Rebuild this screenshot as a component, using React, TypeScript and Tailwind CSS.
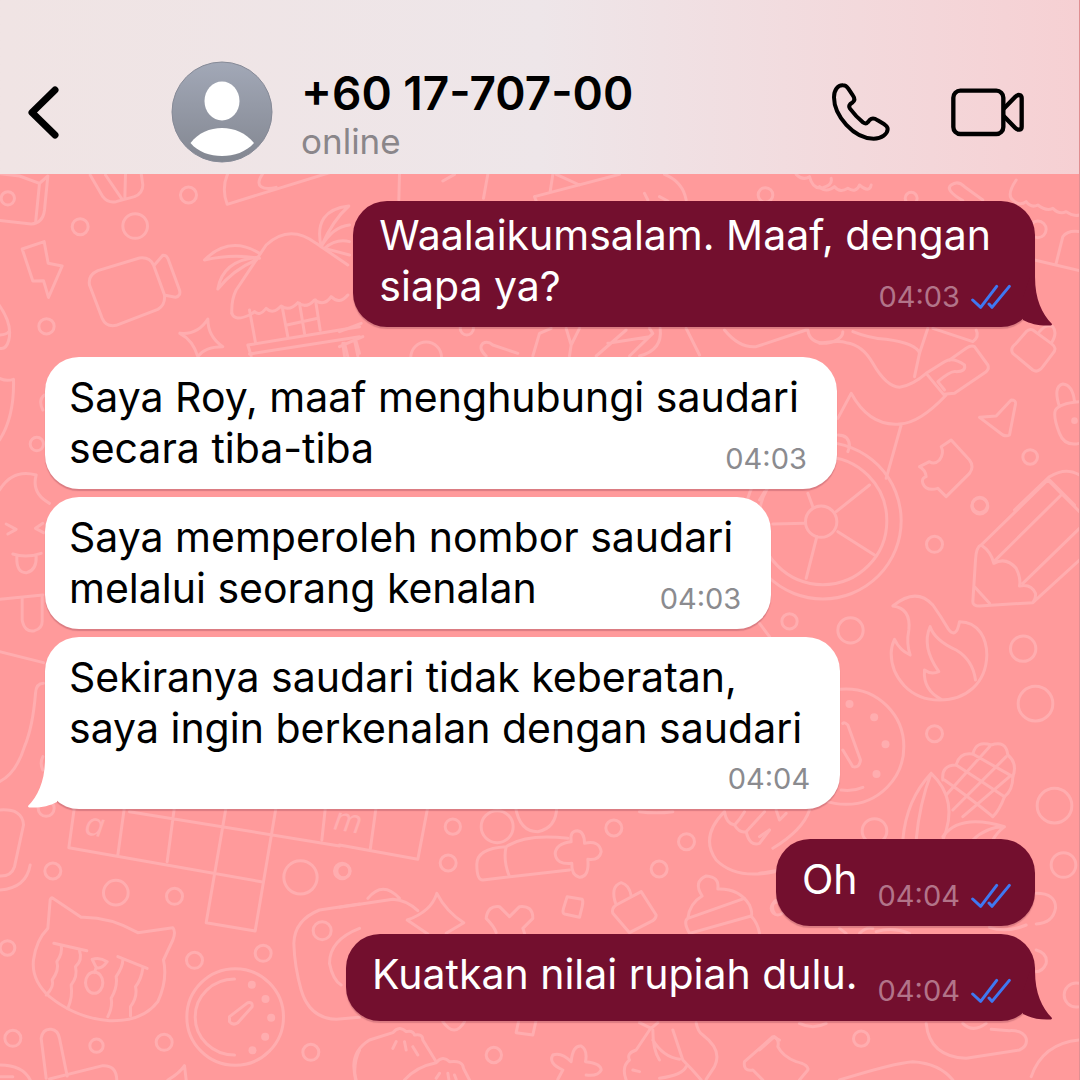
import React from "react";
import clsx from "clsx";

type Message = {
  lines: string[];
  time: string;
  sent?: boolean;
  tail?: boolean;
  snug?: boolean;
  timeBelow?: boolean;
};

const groups: Message[][] = [
  [{ lines: ["Waalaikumsalam. Maaf, dengan", "siapa ya?"], time: "04:03", sent: true, tail: true, snug: true }],
  [
    { lines: ["Saya Roy, maaf menghubungi saudari", "secara tiba-tiba"], time: "04:03" },
    { lines: ["Saya memperoleh nombor saudari", "melalui seorang kenalan"], time: "04:03" },
    {
      lines: ["Sekiranya saudari tidak keberatan,", "saya ingin berkenalan dengan saudari"],
      time: "04:04",
      tail: true,
      timeBelow: true,
    },
  ],
  [
    { lines: ["Oh"], time: "04:04", sent: true },
    { lines: ["Kuatkan nilai rupiah dulu."], time: "04:04", sent: true, tail: true },
  ],
];

/* Each tile of the wallpaper is drawn on a grid three times finer than the page. */
type Tile = { x: number; y: number; paths: string[]; rings: number[][]; dots?: number[][] };

const tiles: Tile[] = [
  {
    x: 0,
    y: 170,
    paths: [
      "M-10 10L60 18L120 40L145 18M120 40L108 160M145 18L135 120Q130 160 95 162L-10 150",
      "M272 15L310 80Q325 100 350 95L405 80Q430 70 430 45L425 10M318 15L368 88M378 12L376 85",
      "M685 10Q665 55 683 103L1000 5M790 10Q770 40 785 50Q800 60 830 52",
      "M68 237L134 215L146 280L188 288L147 382L132 332L100 333Z",
      "M270 345Q265 315 295 302L420 264Q450 260 462 285L495 375Q498 405 475 418L350 466Q320 472 308 445ZM465 285L490 256Q500 255 505 265L540 360Q545 378 528 382L497 376",
      "M541 490Q595 495 625 447Q625 500 670 530Q615 530 595 560Q580 510 541 490",
      "M697 430Q695 390 710 360L800 225Q870 160 950 220L1045 285",
      "M697 430Q705 455 750 435Q760 430 765 425Q780 440 800 415Q820 435 845 408Q870 425 895 398Q920 418 945 390Q975 410 995 380Q1020 405 1045 375",
      "M750 420L768 518M848 410L865 500M900 400L915 490M948 390L962 480M862 465L955 445M745 525L1080 470M745 525L755 558M750 552L1080 500M1035 520L1045 560M1070 515L1080 550",
      "M780 250Q690 195 615 270Q700 250 780 265M775 262Q670 270 655 357Q700 300 770 270",
      "M965 230Q940 120 1048 108Q1000 150 965 230M965 230Q1000 170 1050 165M975 235Q1010 205 1050 215M975 235L1050 255",
      "M-5 400Q40 460 28 510Q20 540 0 535M0 495Q20 495 28 485",
    ],
    rings: [[25, 85, 20], [567, 75, 24], [242, 170, 24], [407, 168, 37], [141, 469, 23]],
  },
  {
    x: 340,
    y: 165,
    paths: [
      "M180 28L178 105M345 28L310 48M445 28L432 100M640 28L632 80M585 95L840 28M650 28L720 60M585 95L590 108",
      "M975 28Q1030 50 1040 105M1370 28Q1390 48 1410 35Q1420 75 1450 68Q1480 60 1475 40M915 85L925 105M960 95L985 108",
    ],
    rings: [[1278, 90, 22]],
  },
  {
    x: 340,
    y: 320,
    paths: [
      "M0 35L65 10M0 80L70 50M10 70L15 108M45 60L55 108M440 108Q415 85 430 70Q445 62 460 75L535 100",
      "M580 108L600 40L635 25M680 25L695 75L720 25M695 75L690 108M770 108L860 30M805 70L930 50M870 108L940 40L930 25M900 108Q970 90 962 25",
      "M1040 25L1080 105M1155 30Q1200 85 1250 80L1400 30M1405 30Q1410 70 1460 70Q1510 60 1510 35",
    ],
    rings: [[260, 112, 46], [382, 25, 20]],
  },
  {
    x: 820,
    y: 180,
    paths: [
      "M0 20Q20 40 45 20Q60 40 85 25Q110 40 120 15Q150 40 155 15M430 62Q375 30 395 15Q415 0 435 20L490 60",
      "M590 0Q560 45 580 60Q600 80 620 65Q635 85 655 75Q680 95 700 85Q720 105 740 95Q760 110 780 105M645 240L780 272M710 250L730 170Q745 150 780 155",
      "M590 490Q570 505 580 520L640 570Q655 580 670 560L700 520Q715 505 695 490L640 450Q630 445 620 455ZM660 455Q680 430 700 440Q715 460 695 490",
      "M0 490Q60 480 80 488Q130 495 160 550Q200 620 240 622Q280 615 320 580L375 545Q400 530 435 555Q440 575 410 575Q395 570 355 605L375 630",
      "M320 580L372 643L405 640L500 575Q510 565 505 555L465 500Q455 495 440 505L390 540M55 715L95 640Q150 740 240 732Q300 730 380 645M245 735L200 895",
      "M285 590L300 520L325 445M100 455Q150 475 200 478Q290 490 300 520M340 445L460 485Q480 470 470 450",
      "M480 712L530 708L575 660Q590 660 588 672L570 765Q562 770 550 765Z",
      "M395 780L450 840Q465 860 450 880L380 950L355 925Q320 935 310 910Q305 895 320 890Q318 870 300 860L330 845Q345 855 360 840Q375 820 365 800Z",
      "M720 680Q700 620 730 612Q760 615 765 665M780 665Q720 670 708 690Q700 710 720 760Q735 800 780 790",
      "M585 990L690 890Q740 860 780 885M690 900L765 975M55 765Q90 765 90 800L85 815",
    ],
    rings: [[275, 55, 18], [655, 148, 25], [632, 831, 22], [481, 975, 23]],
    dots: [[765, 722, 10]],
  },
  {
    x: 760,
    y: 480,
    paths: [
      "M230 95L330 15M235 155L345 225M172 170L140 295M138 130L40 132M160 80L145 40",
      "M960 95L865 0L665 195Q650 200 648 240L640 365Q640 378 660 378L820 368L960 240M665 195Q695 215 703 250Q740 230 770 265Q785 295 780 318Q815 310 828 340Q830 355 820 368M703 245L905 45M790 310L960 145M645 320L690 370",
      "M400 378Q470 320 520 375Q545 410 565 445Q590 480 600 425C660 425 682 480 682 525C680 610 620 660 540 660C450 660 395 590 395 520Q395 500 405 478Q420 510 452 525Q440 490 448 450Q455 385 400 378",
      "M545 658Q490 630 495 570Q515 585 538 575Q485 500 512 440Q525 480 590 510Q640 540 648 600",
      "M250 730Q255 725 265 735L303 840Q300 865 280 860L250 810M245 930Q280 935 310 922",
      "M515 880Q440 960 430 1080M515 880Q480 970 470 1080M515 880Q600 960 550 1080",
      "M550 900Q545 855 590 855Q600 815 640 822Q650 780 695 795Q740 780 745 825Q775 850 760 890Q760 930 735 950Q720 990 700 1010",
      "M590 855Q660 900 735 950M640 822L760 890M555 900Q640 960 700 1010M580 990L740 830M560 945L690 800M610 1010L750 890",
      "M550 1070Q600 1000 735 1040Q710 1060 700 1080M640 1080Q680 1040 735 1040",
      "M0 60L15 35M0 430L30 470M150 990Q130 1050 40 1105M50 990L60 1020L80 1000M0 1070L30 1050",
    ],
    rings: [
      [185, 125, 47], [190, 122, 192], [190, 122, 235], [260, 800, 173], [661, 78, 24], [525, 193, 24], [90, 424, 23],
      [273, 451, 38], [791, 506, 38], [828, 671, 52], [525, 761, 24], [885, 977, 52], [345, 1053, 37],
    ],
    dots: [[270, 672, 12], [344, 712, 12], [378, 793, 12], [351, 882, 12]],
  },
  {
    x: 0,
    y: 340,
    paths: [
      "M0 115Q20 125 42 118Q45 230 0 300M135 165Q115 180 130 210M0 450Q40 385 110 405Q95 460 150 490",
      "M20 552L50 568L25 582M130 550L108 565L132 578M40 642Q80 655 125 640M52 650Q50 700 82 698Q112 690 110 648",
      "M0 778L130 765M68 772L68 840Q75 878 105 872Q130 865 128 840L128 768M0 935L132 968M132 1030Q110 1030 108 1060Q100 1160 75 1220Q50 1300 0 1325M130 1250Q120 1270 130 1290",
    ],
    rings: [[112, 312, 20]],
  },
  {
    x: 0,
    y: 780,
    paths: [
      "M225 80L208 203L785 305M375 80L355 225M525 80L503 245M680 80L620 428L767 453L830 80M390 95L1020 198M978 80L967 180",
      "M0 90Q70 85 72 135L45 260Q35 290 0 288M0 330Q80 325 92 255",
      "M160 355L245 412Q330 410 415 458L520 443Q530 455 520 480L492 540Q505 600 475 665Q430 725 330 722Q230 715 150 650Q95 600 102 540Q110 480 145 445L152 360Q155 350 160 355",
      "M163 490L262 512M355 530L443 565M185 495Q190 520 172 545Q180 570 158 600Q165 620 140 645M240 512Q250 540 228 560Q235 590 215 615Q220 650 205 685",
      "M370 540Q370 560 350 590Q355 620 335 655Q340 680 325 710M430 565Q425 600 408 620Q415 650 393 680L393 708M278 538Q300 530 323 545Q305 570 290 562ZM290 562L285 578",
      "M258 608a26 32 0 1 0 52 0a26 32 0 1 0 -52 0M705 597A118 114 0 0 0 705 825M690 710L745 668Q760 665 758 680L715 728Q700 738 690 725Z",
      "M140 895L125 775Q130 745 155 748Q175 750 180 775L203 888M150 897L310 857Q350 855 352 900M0 855Q70 855 92 900M0 890L40 890M505 900Q540 880 555 857L560 900",
      "M1080 372L960 390Q885 420 883 490Q885 560 905 630Q930 715 1010 718L1080 712M1080 445Q990 480 990 550Q1000 600 1025 615M1080 810Q1060 850 1068 900",
    ],
    rings: [
      [707, 711, 145], [160, 273, 24], [349, 338, 37], [525, 349, 24], [903, 292, 50], [1028, 273, 23], [24, 504, 22],
      [585, 541, 24], [791, 520, 24], [968, 452, 27], [40, 775, 24], [291, 797, 20], [494, 787, 24], [934, 817, 24], [140, 85, 24],
    ],
    dots: [[757, 614, 12], [798, 657, 12], [815, 713, 12], [797, 770, 12], [759, 811, 12]],
  },
  {
    x: 340,
    y: 790,
    paths: [
      "M0 165L235 208L265 50M110 50L92 180M528 50Q540 125 595 125Q650 115 652 50",
      "M500 170Q410 175 412 225Q412 270 430 270L690 240M500 170Q490 210 510 260M500 170Q560 130 685 145",
      "M695 155Q690 122 714 122Q735 125 735 160Q780 150 785 185Q780 212 745 208Q750 260 720 262Q695 255 697 220Q650 225 647 190Q650 160 695 155",
      "M0 352L160 328Q200 330 235 362M85 325Q130 270 180 325M265 432L203 390Q275 365 292 310Q320 365 373 398L320 430",
      "M470 428Q465 410 440 385Q445 345 480 350L510 380L540 350Q580 345 580 385L550 415L555 430",
      "M683 320L728 328Q732 335 728 350L720 382L675 372Q668 370 672 355Z",
      "M870 428L820 370Q815 355 830 345L905 305L950 375Q950 385 940 392ZM830 345Q810 290 845 278Q870 285 875 318",
      "M1045 385Q1050 340 1088 318Q1060 275 1100 258Q1140 260 1135 297Q1200 295 1230 345Q1240 370 1235 378L1050 430M1045 385L1215 325M1045 385Q1030 395 1050 430M1235 378Q1255 400 1260 430",
      "M1155 65Q1080 140 1130 210Q1190 270 1305 245M1155 65Q1160 100 1185 105Q1200 90 1215 65M1185 105Q1200 130 1220 125L1275 65M1220 125Q1230 170 1260 160L1290 120M1310 330Q1290 345 1305 370M900 65Q950 72 1000 65",
    ],
    rings: [[473, 110, 48], [340, 110, 23], [326, 219, 24], [12, 243, 20], [823, 114, 24], [1041, 155, 24], [959, 237, 24]],
  },
  {
    x: 760,
    y: 820,
    paths: [
      "M830 220Q890 220 888 265Q880 310 830 312M690 322Q740 340 800 315M830 390Q865 400 860 430Q850 455 828 455M0 160L48 152",
      "M500 610Q510 710 620 715L780 690Q805 680 800 655Q790 630 750 632L695 628M120 610Q160 630 200 610M610 610Q640 640 680 610",
      "M0 690L45 650Q60 660 55 680Q70 710 110 725Q150 735 145 750L120 780M240 780Q400 730 460 725Q540 730 580 780M815 770Q850 670 960 660",
      "M240 325L260 340M300 340Q320 320 340 325M350 335Q400 320 450 340",
    ],
    rings: [[912, 135, 37], [950, 525, 36], [55, 265, 20], [305, 656, 23]],
  },
  {
    x: 340,
    y: 1000,
    paths: [
      "M50 240Q25 160 90 120L160 98Q180 75 200 95Q220 90 225 105Q250 100 250 120L290 185M170 125L160 145M195 125L200 150M220 140L235 165",
      "M195 240Q230 200 290 188Q310 165 330 185Q370 180 372 205L390 240M300 220L290 235M325 220L328 238M345 225L350 238M310 65Q345 115 375 65M538 60L530 98L580 105L590 60",
      "M655 238L670 210Q625 190 640 165Q665 155 695 185Q700 135 725 138Q745 150 738 185Q785 190 785 210Q775 230 740 225",
      "M900 68L935 85L955 68M930 90L890 150Q860 160 870 180Q845 200 860 240M940 90Q940 150 960 180M940 120Q970 170 1020 178M1000 90L1030 180Q1060 210 1085 240M1070 68Q1075 95 1090 105Q1150 150 1125 200L1100 238M960 235Q1030 225 1040 200M880 210L900 215",
      "M1320 120L1300 110L1215 185Q1210 215 1240 210L1270 240",
    ],
    rings: [[463, 165, 23]],
  },
];

function Wallpaper() {
  return (
    <svg
      aria-hidden="true"
      viewBox="0 174 1080 906"
      preserveAspectRatio="xMidYMin slice"
      className="absolute inset-0 size-full"
      fill="none"
      stroke="#ffadaf"
      strokeWidth="9"
      strokeLinecap="round"
      strokeLinejoin="round"
    >
      {tiles.map((t) => (
        <g key={`${t.x}-${t.y}`} transform={`translate(${t.x} ${t.y}) scale(0.33333)`}>
          {t.paths.map((d) => (
            <path key={d} d={d} />
          ))}
          {t.rings.map(([cx, cy, r]) => (
            <circle key={`${cx}-${cy}-${r}`} cx={cx} cy={cy} r={r} />
          ))}
          {t.dots?.map(([cx, cy, r]) => (
            <circle key={`${cx}-${cy}`} cx={cx} cy={cy} r={r} fill="#ffadaf" stroke="none" />
          ))}
        </g>
      ))}
      <g fill="#ffadaf" stroke="none" fontSize="32" fontStyle="italic">
        <text x="84" y="834" transform="rotate(10 84 834)">a</text>
        <text x="333" y="829" transform="rotate(10 333 829)">m</text>
      </g>
    </svg>
  );
}

function Ticks() {
  return (
    <svg
      role="img"
      aria-label="Read"
      viewBox="0 0 120 78"
      className="h-[26px] w-10 shrink-0"
      fill="none"
      stroke="#3f78f2"
      strokeWidth="9"
      strokeLinecap="round"
      strokeLinejoin="round"
    >
      <path d="M5 48L29 70L77 7M54 60L63 70L115 7" />
    </svg>
  );
}

function Meta({ message }: { message: Message }) {
  return (
    <span
      className={clsx(
        "flex h-10 shrink-0 items-center gap-[11px] text-[29px] leading-10",
        message.sent ? "text-[#b27489]" : "text-[#8b8b8f]",
      )}
    >
      <time>{message.time}</time>
      {message.sent && <Ticks />}
    </span>
  );
}

function Bubble({ message }: { message: Message }) {
  const { lines, sent, tail, snug, timeBelow } = message;
  const lead = timeBelow ? lines : lines.slice(0, -1);
  const last = timeBelow ? null : lines[lines.length - 1];
  return (
    <li
      className={clsx(
        "relative w-fit rounded-[34px] pb-[10px] text-[41px] leading-[51px] shadow-[0_2px_1px_rgba(90,20,40,0.22)]",
        sent ? "self-end bg-[#730f2e] pr-6 pl-[26px] text-white" : "self-start bg-white pr-[30px] pl-6 text-black",
        snug ? "pt-[9px]" : "pt-[15px]",
      )}
    >
      {lead.map((line) => (
        <p key={line} className={clsx("whitespace-nowrap", sent ? "pr-5" : "pr-2")}>
          {line}
        </p>
      ))}
      {last ? (
        <div className="flex items-end justify-between gap-5">
          <p className={clsx("whitespace-nowrap", lines.length > 1 ? "pb-[5px]" : "pb-[11px]")}>{last}</p>
          <Meta message={message} />
        </div>
      ) : (
        <div className="flex justify-end pt-[5px]">
          <Meta message={message} />
        </div>
      )}
      {tail && (
        <svg
          aria-hidden="true"
          viewBox="0 0 30 50"
          className={clsx(
            "absolute bottom-0 h-[50px] w-[30px]",
            sent ? "-right-[17px] fill-[#730f2e]" : "-left-[17px] -scale-x-100 fill-white",
          )}
        >
          <path d="M1 20L8 0H13C13 22 20 37 30 47C30 48 29 48.500 28 48.500C17 49 9 47 1 43Z" />
        </svg>
      )}
    </li>
  );
}

function Header() {
  return (
    <header className="flex min-h-[174px] items-start bg-linear-to-r from-[#f0e4e4] via-[#eee6e9] via-50% to-[#f6d0d3] pt-[61px] pr-[54px] pl-6">
      <button type="button" aria-label="Back" className="mt-5 flex h-[61px] w-10 items-center justify-center">
        <svg viewBox="0 0 40 60" className="h-[60px] w-10" fill="none" stroke="#000" strokeWidth="7" strokeLinecap="round" strokeLinejoin="round">
          <path d="M31 8L8 30.500L31 53" />
        </svg>
      </button>
      <svg role="img" aria-label="Profile photo" viewBox="0 0 102 102" className="ml-[107px] size-[102px] shrink-0">
        <defs>
          <linearGradient id="avatar" x1="0" y1="0" x2="0" y2="1">
            <stop offset="0" stopColor="#a2a8b7" />
            <stop offset="1" stopColor="#838791" />
          </linearGradient>
        </defs>
        <circle cx="51" cy="51" r="50" fill="url(#avatar)" stroke="#868a97" />
        <ellipse cx="51" cy="40" rx="17.500" ry="19.500" fill="#fff" />
        <path d="M19.500 82C27 72 39 67 51 67S75 72 83 82C75 91 63 95 51 95S27 91 19.500 82Z" fill="#fff" />
      </svg>
      <div className="ml-7 min-w-0 flex-1 whitespace-nowrap">
        <h1 className="mt-[5px] text-[46px] leading-[54px] font-semibold text-black">+60 17-707-00</h1>
        <p className="text-[35px] leading-[42px] text-[#8a868a]">online</p>
      </div>
      <button type="button" aria-label="Voice call" className="mt-[22px] shrink-0">
        <svg viewBox="95 67 174 174" className="size-[58px]" fill="none" stroke="#000" strokeWidth="12" strokeLinejoin="round">
          <path d="M128 74C112 73 101 88 101 110C101 165 160 234 220 234C245 234 262 219 262 205C262 199 258 195 252 191L232 179C222 172 215 171 208 178L202 185C198 190 194 189 188 185C174 174 160 159 149 144C145 138 146 134 150 130L157 125C164 119 163 112 158 105L144 84C140 78 134 74 128 74Z" />
        </svg>
      </button>
      <button type="button" aria-label="Video call" className="mt-[27px] ml-[61px] shrink-0">
        <svg viewBox="453 84 222 147" className="h-[49px] w-[74px]" fill="none" stroke="#000" strokeWidth="13" strokeLinejoin="round">
          <rect x="460" y="92" width="150" height="130" rx="21" />
          <path d="M611 146L646 110C654 102 665 104 665 114V200C665 210 654 212 646 204L611 168" />
        </svg>
      </button>
    </header>
  );
}

export default function App() {
  return (
    <div className="flex min-h-screen flex-col overflow-hidden border-r border-[#e08f92] bg-[#ff9a9b] font-['Inter',sans-serif]">
      <Header />
      <main className="relative flex-1">
        <Wallpaper />
        <div className="relative flex flex-col gap-[30px] pt-[27px] pr-11 pb-[57px] pl-[45px]">
          {groups.map((group) => (
            <ul key={group[0].lines[0]} className="flex flex-col gap-2">
              {group.map((m) => (
                <Bubble key={m.lines[0]} message={m} />
              ))}
            </ul>
          ))}
        </div>
      </main>
    </div>
  );
}
